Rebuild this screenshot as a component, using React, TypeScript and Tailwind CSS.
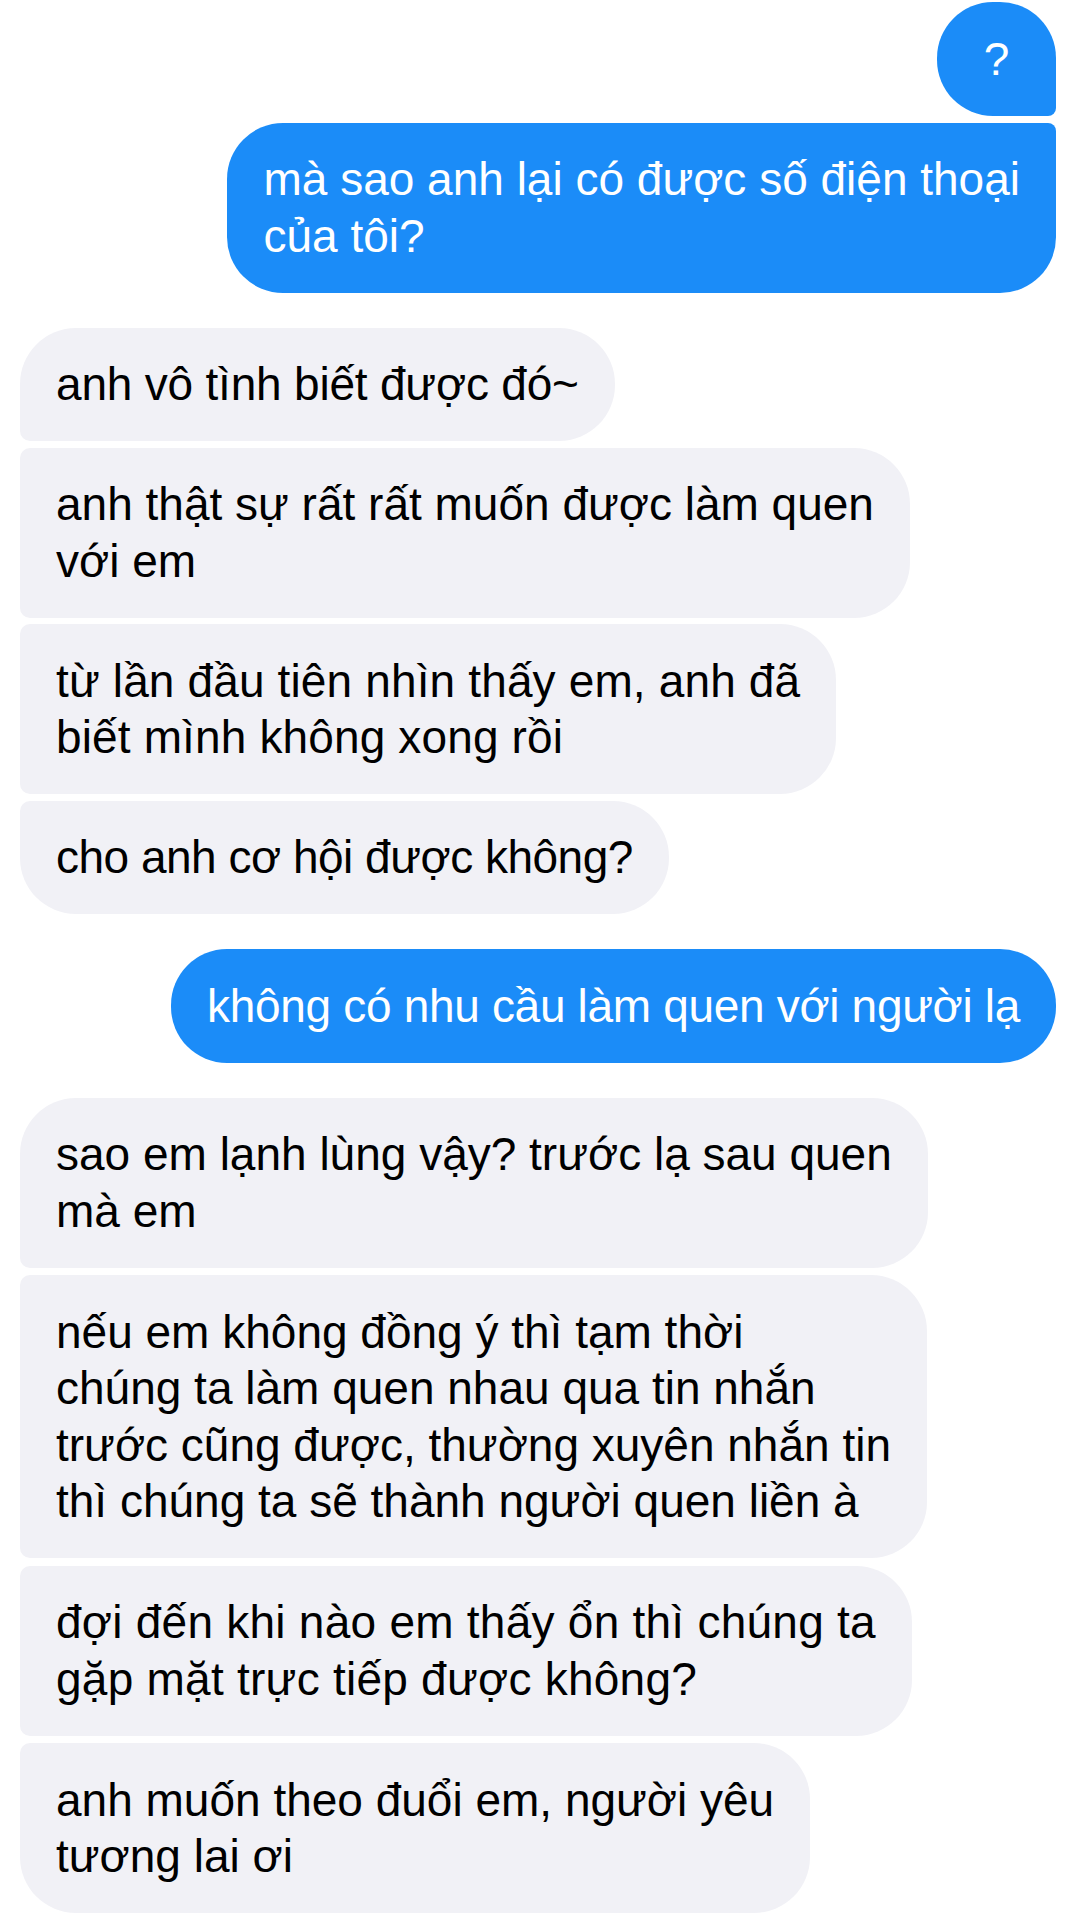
import React from 'react';

type Msg = {
  lines: string[];
  corners: string;
  tracking?: string;
};

const outgoingTop: Msg[] = [
  { lines: ['?'], corners: 'rounded-[56px] rounded-br-[8px]' },
  {
    lines: ['mà sao anh lại có được số điện thoại', 'của tôi?'],
    corners: 'rounded-[56px] rounded-tr-[8px]',
  },
];

const incomingFirst: Msg[] = [
  {
    lines: ['anh vô tình biết được đó~'],
    corners: 'rounded-[56px] rounded-bl-[10px]',
    tracking: 'tracking-[-0.2px]',
  },
  {
    lines: ['anh thật sự rất rất muốn được làm quen', 'với em'],
    corners: 'rounded-[56px] rounded-tl-[10px] rounded-bl-[10px]',
  },
  {
    lines: ['từ lần đầu tiên nhìn thấy em, anh đã', 'biết mình không xong rồi'],
    corners: 'rounded-[56px] rounded-tl-[10px] rounded-bl-[10px]',
    tracking: 'tracking-[0.14px]',
  },
  {
    lines: ['cho anh cơ hội được không?'],
    corners: 'rounded-[56px] rounded-tl-[10px]',
    tracking: 'tracking-[-0.5px]',
  },
];

const incomingSecond: Msg[] = [
  {
    lines: ['sao em lạnh lùng vậy? trước lạ sau quen', 'mà em'],
    corners: 'rounded-[56px] rounded-bl-[10px]',
  },
  {
    lines: [
      'nếu em không đồng ý thì tạm thời',
      'chúng ta làm quen nhau qua tin nhắn',
      'trước cũng được, thường xuyên nhắn tin',
      'thì chúng ta sẽ thành người quen liền à',
    ],
    corners: 'rounded-[56px] rounded-tl-[10px] rounded-bl-[10px]',
  },
  {
    lines: ['đợi đến khi nào em thấy ổn thì chúng ta', 'gặp mặt trực tiếp được không?'],
    corners: 'rounded-[56px] rounded-tl-[10px] rounded-bl-[10px]',
    tracking: 'tracking-[0.25px]',
  },
  {
    lines: ['anh muốn theo đuổi em, người yêu', 'tương lai ơi'],
    corners: 'rounded-[56px] rounded-tl-[10px]',
  },
];

function Bubble({ msg, mine }: { msg: Msg; mine: boolean }) {
  const single = msg.lines.length === 1 && msg.lines[0] === '?';
  return (
    <div
      className={`${msg.corners} ${msg.tracking ?? ''} ${
        mine ? 'self-end bg-[#1b8cf8] text-white' : 'self-start bg-[#f1f1f6] text-black'
      } ${single ? 'w-[119px] text-center' : 'px-[36px]'} py-[28.5px] text-[46px] leading-[56.5px] whitespace-nowrap`}
    >
      {msg.lines.map((l, i) => (
        <div key={i}>{l}</div>
      ))}
    </div>
  );
}

function Group({ items, mine, gap }: { items: Msg[]; mine: boolean; gap: string }) {
  return (
    <div className={`flex flex-col ${gap}`}>
      {items.map((m, i) => (
        <Bubble key={i} msg={m} mine={mine} />
      ))}
    </div>
  );
}

export default function App() {
  return (
    <div
      className="w-[1079px] h-[1920px] overflow-hidden bg-white pt-[2px] pl-[20px] pr-[23px] flex flex-col gap-[35px]"
      style={{ fontFamily: '"Liberation Sans", Arial, sans-serif' }}
    >
      <Group items={outgoingTop} mine gap="gap-[7px]" />
      <Group items={incomingFirst} mine={false} gap="gap-[6.5px]" />
      <Group
        items={[
          {
            lines: ['không có nhu cầu làm quen với người lạ'],
            corners: 'rounded-[56px]',
            tracking: 'tracking-[-0.32px]',
          },
        ]}
        mine
        gap="gap-[7px]"
      />
      <Group items={incomingSecond} mine={false} gap="gap-[7.5px]" />
    </div>
  );
}
